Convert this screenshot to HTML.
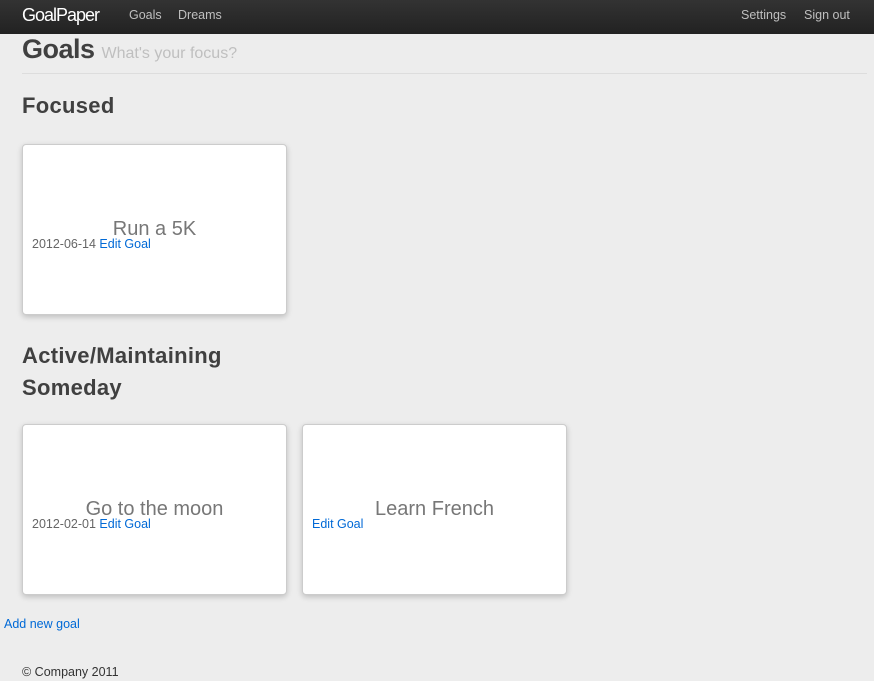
<!DOCTYPE html>
<html><head><style>
body{margin:0;background:#ededed;font-family:"Liberation Sans",Arial,sans-serif;width:874px;height:681px;position:relative;overflow:hidden;color:#333}
.nav{position:absolute;top:0;left:0;width:874px;height:34px;background:linear-gradient(#333,#222);}
.nav span{position:absolute;top:8px;font-size:12.5px;color:#bfbfbf}
.brand{font-size:18px!important;color:#fff!important;top:5px!important;letter-spacing:-1px}
.a{position:absolute}
h{position:absolute;font-weight:bold;font-size:22px;color:#404040;letter-spacing:0.3px}
.card{position:absolute;width:263px;height:169px;background:#fff;border:1px solid #ccc;border-radius:4px;box-shadow:0 2px 6px rgba(0,0,0,.2)}
.t{position:absolute;top:73px;left:0;width:263px;text-align:center;font-size:20px;color:#777}
.m{position:absolute;top:92px;left:9px;font-size:12.5px;color:#666}
a{color:#0069d6;text-decoration:none}
</style></head><body>
<div class="nav">
<span class="brand" style="left:22px">GoalPaper</span>
<span style="left:129px">Goals</span>
<span style="left:178px">Dreams</span>
<span style="left:741px">Settings</span>
<span style="left:804px">Sign out</span>
</div>
<div class="a" style="left:22px;top:34px;font-size:27px;font-weight:bold;color:#404040;letter-spacing:-0.5px">Goals <span style="font-size:16px;color:#bfbfbf;font-weight:normal;letter-spacing:0">What's your focus?</span></div>
<div class="a" style="left:22px;top:73px;width:845px;border-top:1px solid #ddd"></div>
<h style="left:22px;top:93px">Focused</h>
<div class="card" style="left:22px;top:144px"><div class="t">Run a 5K</div><div class="m">2012-06-14 <a>Edit Goal</a></div></div>
<h style="left:22px;top:343px">Active/Maintaining</h>
<h style="left:22px;top:375px">Someday</h>
<div class="card" style="left:22px;top:424px"><div class="t">Go to the moon</div><div class="m">2012-02-01 <a>Edit Goal</a></div></div>
<div class="card" style="left:302px;top:424px"><div class="t">Learn French</div><div class="m"><a>Edit Goal</a></div></div>
<a class="a" style="left:4px;top:617px;font-size:12.5px">Add new goal</a>
<div class="a" style="left:22px;top:665px;font-size:12.5px;color:#333">© Company 2011</div>
</body></html>
